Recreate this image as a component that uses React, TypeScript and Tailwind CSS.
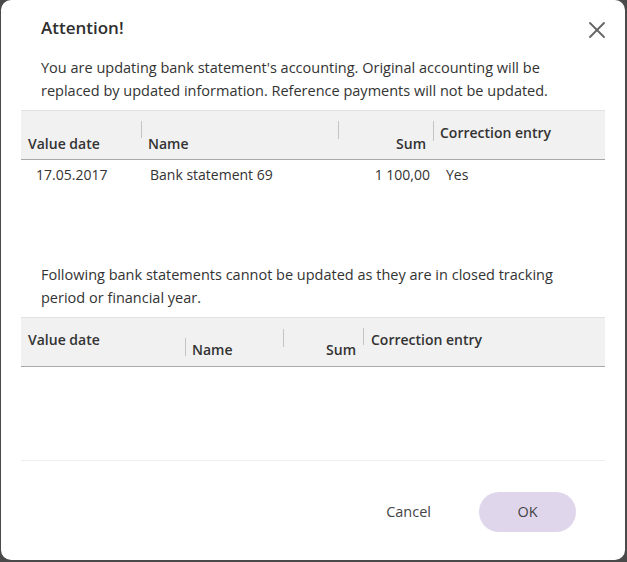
import { X } from "lucide-react"

const font = { fontFamily: "'Open Sans', Lato, sans-serif" }

function Sep({ className }: { className: string }) {
  return <div className={`w-px shrink-0 bg-[#c4c4c4] ${className}`} />
}

export default function App() {
  return (
    <div className="w-[627px] h-[562px] bg-[#4a4a4a] pl-px overflow-hidden" style={font}>
      <div className="w-[624px] h-[560px] bg-white rounded-[10px] flex flex-col text-[#333]">
        {/* header */}
        <div className="flex items-start justify-between pl-[40px] pr-[14px] pt-[17px]">
          <h1 className="text-[17px] leading-[22px] font-semibold text-[#2f2f2f]">Attention!</h1>
          <button className="text-[#666] -mt-[1px]">
            <X className="w-[28px] h-[28px]" strokeWidth={1.6} />
          </button>
        </div>

        <p className="pl-[40px] pt-[12px] text-[14.5px] leading-[23px]">
          You are updating bank statement's accounting. Original accounting will be
          <br />
          replaced by updated information. Reference payments will not be updated.
        </p>

        {/* table 1 */}
        <div className="mx-[20px] mt-[8px] h-[153px]">
          <div className="flex items-start h-[50px] bg-[#f1f1f1] border-t border-[#e2e2e2] border-b border-b-[#a8a8a8] text-[14px] leading-[20px] font-semibold">
            <div className="w-[120px] pl-[7px] pt-[23px]">Value date</div>
            <Sep className="mt-[10px] h-[17px]" />
            <div className="w-[196px] pl-[6px] pt-[23px]">Name</div>
            <Sep className="mt-[10px] h-[18px]" />
            <div className="w-[94px] pr-[7px] pt-[23px] text-right">Sum</div>
            <Sep className="mt-[10px] h-[20px]" />
            <div className="flex-1 pl-[6px] pt-[12px]">Correction entry</div>
          </div>
          <div className="flex items-center h-[29px] text-[14px]">
            <div className="w-[121px] pl-[15px]">17.05.2017</div>
            <div className="w-[197px] pl-[8px]">Bank statement 69</div>
            <div className="w-[95px] pr-[4px] text-right">1 100,00</div>
            <div className="flex-1 pl-[12px]">Yes</div>
          </div>
        </div>

        <p className="pl-[40px] text-[14.5px] leading-[23px]">
          Following bank statements cannot be updated as they are in closed tracking
          <br />
          period or financial year.
        </p>

        {/* table 2 */}
        <div className="mx-[20px] mt-[8px] h-[144px] border-b border-[#eeeeee]">
          <div className="flex items-start h-[50px] bg-[#f1f1f1] border-t border-[#e2e2e2] border-b border-b-[#a8a8a8] text-[14px] leading-[20px] font-semibold">
            <div className="w-[164px] pl-[7px] pt-[12px]">Value date</div>
            <Sep className="mt-[20px] h-[18px]" />
            <div className="w-[97px] pl-[6px] pt-[22px]">Name</div>
            <Sep className="mt-[11px] h-[18px]" />
            <div className="w-[79px] pr-[7px] pt-[22px] text-right">Sum</div>
            <Sep className="mt-[10px] h-[17px]" />
            <div className="flex-1 pl-[7px] pt-[12px]">Correction entry</div>
          </div>
        </div>

        {/* footer */}
        <div className="flex items-center justify-end gap-[48px] pr-[49px] pt-[31px] text-[14.5px]">
          <button className="text-[#444]">Cancel</button>
          <button className="w-[97px] h-[40px] rounded-full bg-[#e0d6ec] text-[#444]">OK</button>
        </div>
      </div>
    </div>
  )
}
